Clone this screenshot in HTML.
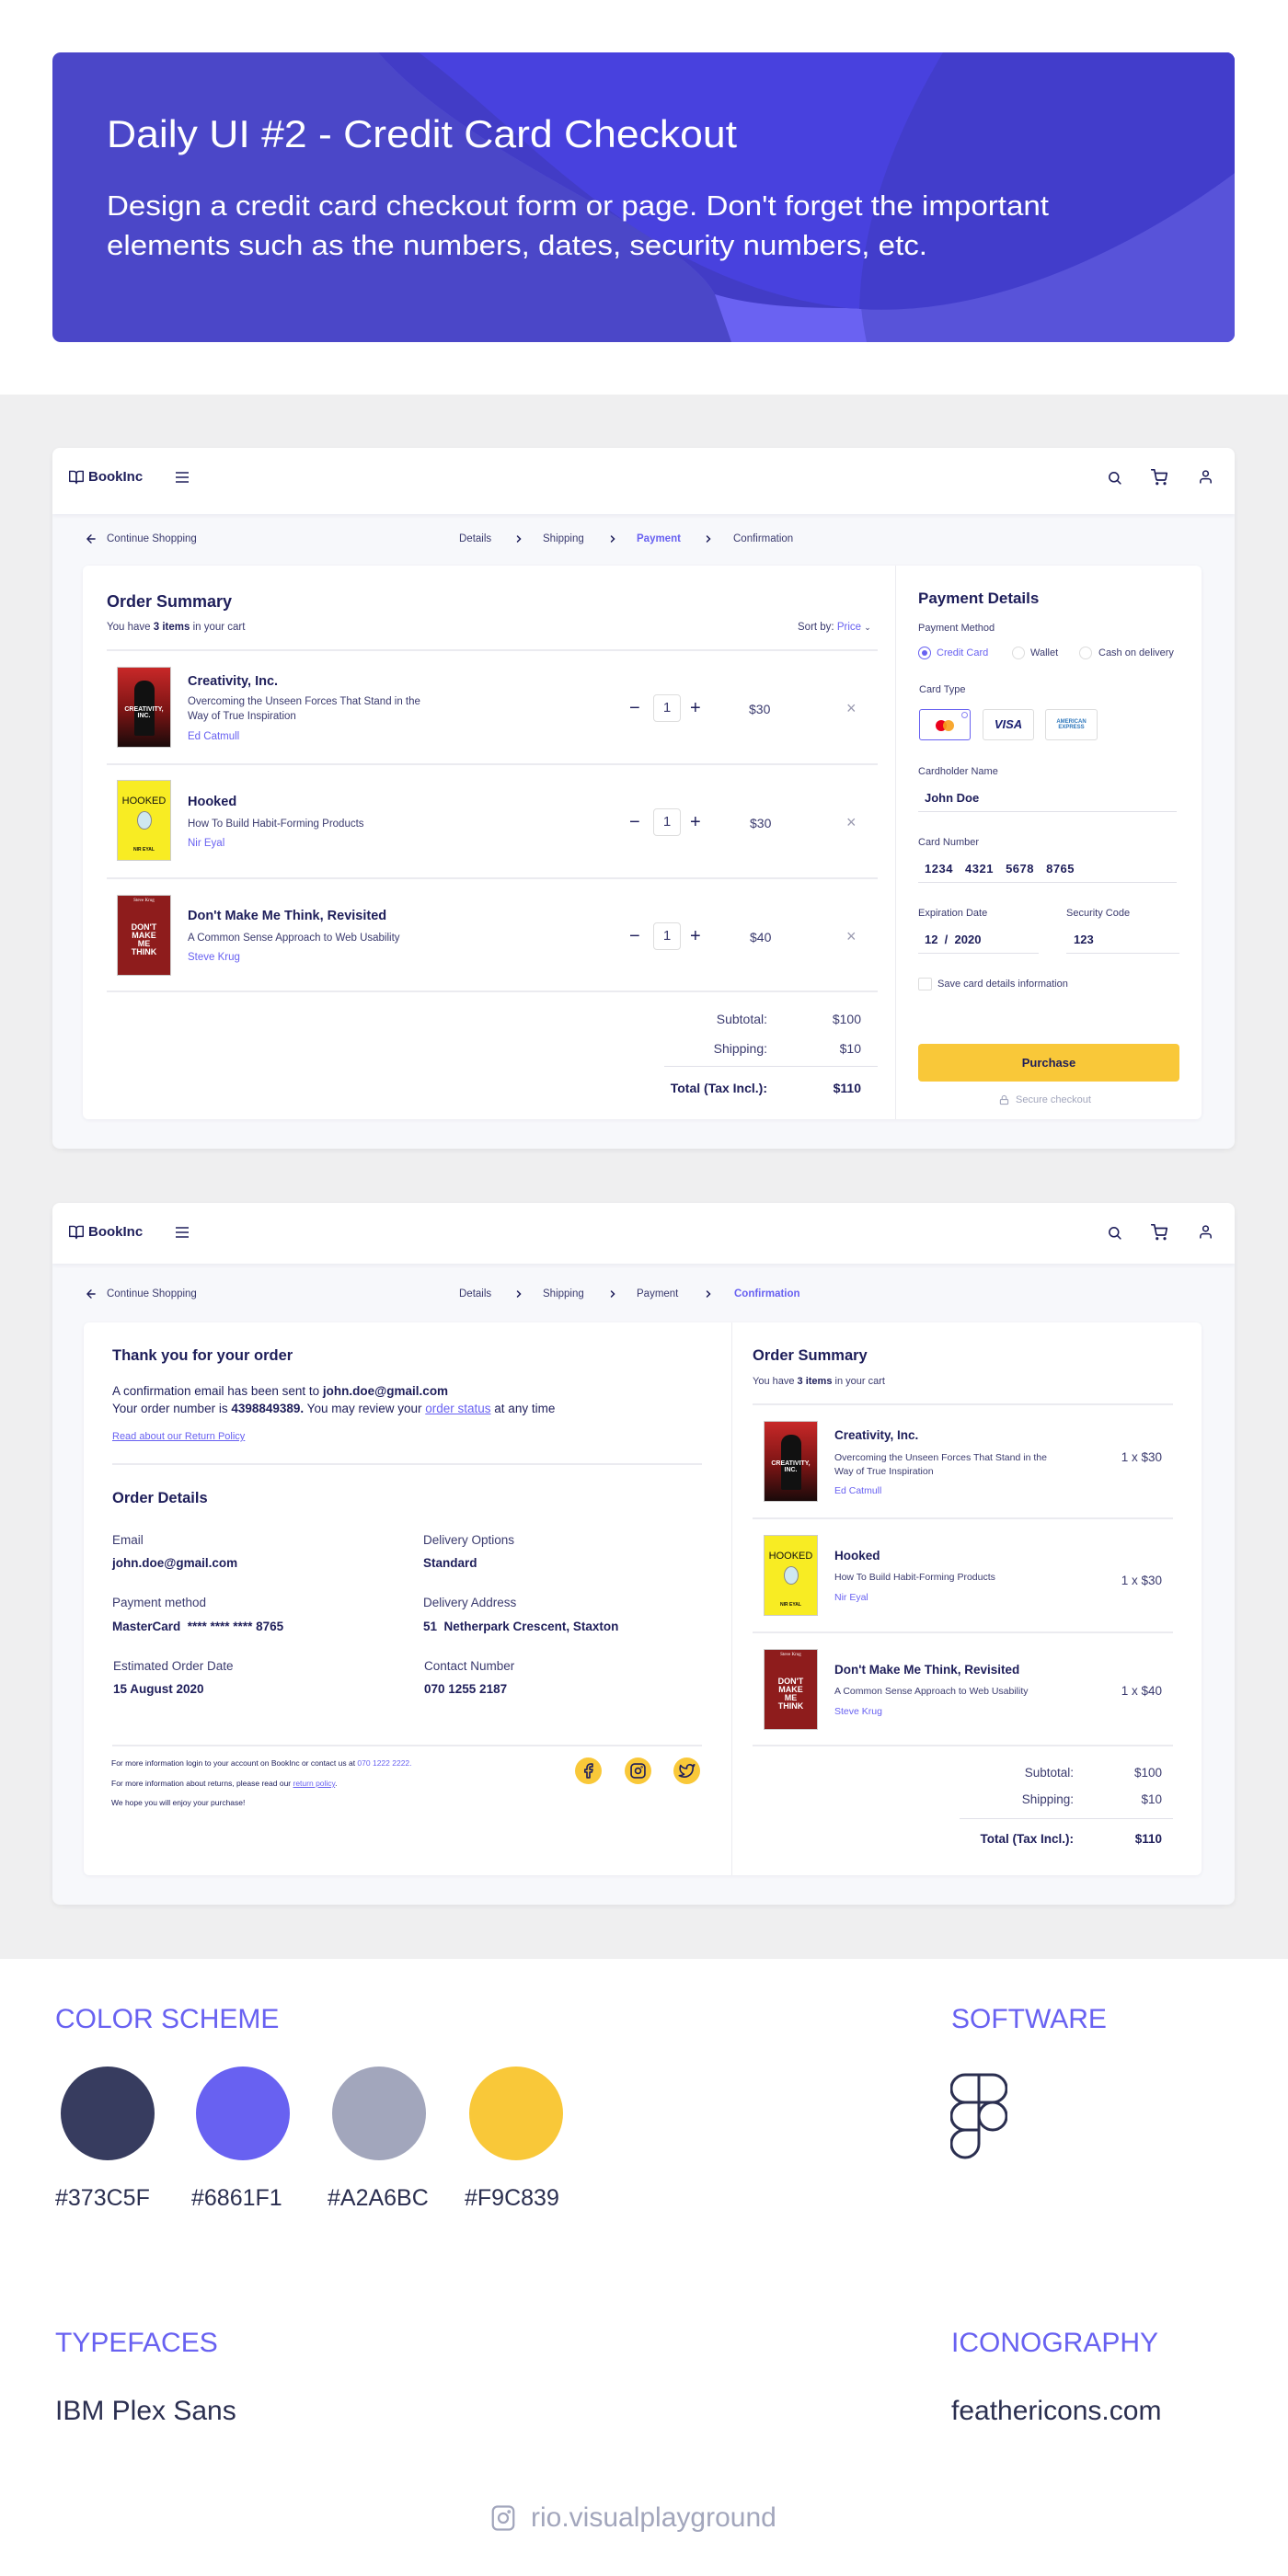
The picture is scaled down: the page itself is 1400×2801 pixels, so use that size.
<!DOCTYPE html>
<html><head><meta charset="utf-8">
<style>
*{margin:0;padding:0;box-sizing:border-box}
body{width:1400px;height:2801px;position:relative;background:#fff;font-family:"Liberation Sans",sans-serif;color:#1E1E5A;overflow:hidden}
.a{position:absolute;white-space:nowrap}
.gray{position:absolute;left:0;top:429px;width:1400px;height:1701px;background:#EFEFF0}
.oc{position:absolute;left:57px;width:1285px;background:#F7F8FB;border-radius:8px;box-shadow:0 2px 6px rgba(0,0,0,.06);overflow:hidden}
.nav{position:absolute;left:0;top:0;width:100%;background:#fff;box-shadow:0 2px 4px rgba(30,30,90,.06)}
.ic{position:absolute;width:100%;background:#fff;border-radius:6px;box-shadow:0 1px 4px rgba(30,30,90,.06)}
.hr{position:absolute;height:2px;background:#EBEBF0}
.navy{color:#1E1E5A}.body{color:#3A3A6E}.acc{color:#6861F1}
.b{font-weight:bold}
.cover{position:absolute;width:59px;height:88px;overflow:hidden;border:1px solid #ccc}
.qbox{position:absolute;width:30px;height:30px;border:1px solid #ddd;border-radius:4px;text-align:center;line-height:28px;font-size:15px;color:#3A3A6E}
.soc{position:absolute;width:29px;height:29px;border-radius:50%;background:#F9C839}
</style></head><body>

<!-- banner -->
<svg class="a" style="left:57px;top:57px" width="1285" height="315" viewBox="0 0 1285 315">
<defs><clipPath id="cp"><rect width="1285" height="315" rx="9"/></clipPath></defs>
<g clip-path="url(#cp)">
<rect width="1285" height="315" fill="#4B47C8"/>
<path d="M354,0 C460,120 680,190 720,263 L738,315 L1285,315 L1285,0Z" fill="#6A62F2"/>
<path d="M968,0 C900,100 860,200 885,315 L1285,315 L1285,0Z" fill="#5853D9"/>
<path d="M354,0 C460,120 680,190 720,263 C760,275 810,278 863,278 C1050,290 1220,180 1285,131 L1285,0Z" fill="#423CC6"/>
<path d="M398,0 C520,90 640,250 863,278 C1050,290 1220,180 1285,131 L1285,0Z" fill="#4841DE"/>
<path d="M968,0 C915,90 880,180 877,279 C1050,290 1220,180 1285,131 L1285,0Z" fill="#423DCB"/>
</g>
<text x="59" y="103" fill="#fff" font-family="Liberation Sans" font-size="42" textLength="685" lengthAdjust="spacingAndGlyphs">Daily UI  #2 - Credit Card Checkout</text>
<text x="59" y="177" fill="#fff" font-family="Liberation Sans" font-size="31" textLength="1024" lengthAdjust="spacingAndGlyphs">Design a credit card checkout form or page. Don't forget the important</text>
<text x="59" y="220" fill="#fff" font-family="Liberation Sans" font-size="31" textLength="892" lengthAdjust="spacingAndGlyphs">elements such as the numbers, dates, security numbers, etc.</text>
</svg>

<div class="gray"></div>

<!-- ============ CARD 1 ============ -->
<div class="oc" style="top:487px;height:762px">
 <div class="nav" style="height:72px"></div>
 <div class="ic" style="left:33px;top:128px;width:1216px;height:602px"></div>
</div>

<svg class="a" style="left:74px;top:511px" width="18" height="16" viewBox="0 0 24 22" fill="none" stroke="#1E1E5A" stroke-width="2" stroke-linejoin="round"><path d="M2 2h6a4 4 0 0 1 4 4v14a3 3 0 0 0-3-3H2z"/><path d="M22 2h-6a4 4 0 0 0-4 4v14a3 3 0 0 1 3-3h7z"/></svg>
<div class="a b navy" style="left:96px;top:509px;font-size:15px;line-height:20px">BookInc</div>
<svg class="a" style="left:190px;top:512px" width="16" height="14" viewBox="0 0 16 14" stroke="#1E1E5A" stroke-width="1.6"><path d="M1 2h14M1 7h14M1 12h14"/></svg>
<svg class="a" style="left:1203px;top:511px" width="17" height="17" viewBox="0 0 24 24" fill="none" stroke="#1E1E5A" stroke-width="2.2" stroke-linecap="round"><circle cx="11" cy="11" r="7"/><path d="M21 21l-4.5-4.5"/></svg>
<svg class="a" style="left:1251px;top:510px" width="18" height="18" viewBox="0 0 24 24" fill="none" stroke="#1E1E5A" stroke-width="2.2" stroke-linecap="round" stroke-linejoin="round"><circle cx="9" cy="21" r="1"/><circle cx="20" cy="21" r="1"/><path d="M1 1h4l2.7 13.4a2 2 0 0 0 2 1.6h9.7a2 2 0 0 0 2-1.6L23 6H6"/></svg>
<svg class="a" style="left:1302px;top:510px" width="17" height="17" viewBox="0 0 24 24" fill="none" stroke="#1E1E5A" stroke-width="2.2" stroke-linecap="round"><path d="M20 21v-2a4 4 0 0 0-4-4H8a4 4 0 0 0-4 4v2"/><circle cx="12" cy="7" r="4"/></svg>

<svg class="a" style="left:92px;top:579px" width="14" height="14" viewBox="0 0 24 24" fill="none" stroke="#1E1E5A" stroke-width="2.4" stroke-linecap="round" stroke-linejoin="round"><path d="M19 12H5M12 19l-7-7 7-7"/></svg>
<div class="a body" style="left:116px;top:578px;font-size:11.5px;line-height:16px">Continue Shopping</div>
<div class="a body" style="left:499px;top:578px;font-size:11.5px;line-height:16px">Details</div>
<div class="a body" style="left:590px;top:578px;font-size:11.5px;line-height:16px">Shipping</div>
<div class="a acc b" style="left:692px;top:578px;font-size:11.5px;line-height:16px">Payment</div>
<div class="a body" style="left:797px;top:578px;font-size:11.5px;line-height:16px">Confirmation</div>
<svg class="a" style="left:558px;top:580px" width="12" height="12" viewBox="0 0 24 24" fill="none" stroke="#1E1E5A" stroke-width="3" stroke-linecap="round"><path d="M9 18l6-6-6-6"/></svg>
<svg class="a" style="left:660px;top:580px" width="12" height="12" viewBox="0 0 24 24" fill="none" stroke="#1E1E5A" stroke-width="3" stroke-linecap="round"><path d="M9 18l6-6-6-6"/></svg>
<svg class="a" style="left:764px;top:580px" width="12" height="12" viewBox="0 0 24 24" fill="none" stroke="#1E1E5A" stroke-width="3" stroke-linecap="round"><path d="M9 18l6-6-6-6"/></svg>

<div class="a" style="left:973px;top:615px;width:1px;height:602px;background:#ECECF0"></div>
<div class="a b navy" style="left:116px;top:642px;font-size:18px;line-height:24px">Order Summary</div>
<div class="a body" style="left:116px;top:674px;font-size:11.5px;line-height:16px">You have <b class="navy">3 items</b> in your cart</div>
<div class="a body" style="left:867px;top:674px;font-size:11.5px;line-height:16px">Sort by: <span class="acc">Price</span> <span style="font-size:9px">&#8964;</span></div>
<div class="hr" style="left:116px;top:706px;width:838px"></div>
<div class="hr" style="left:116px;top:830px;width:838px"></div>
<div class="hr" style="left:116px;top:954px;width:838px"></div>
<div class="hr" style="left:116px;top:1077px;width:838px"></div>

<div class="cover" style="left:127px;top:725px;background:linear-gradient(#C82828,#7a1414 55%,#1a0a0a)"><div style="position:absolute;left:18px;top:14px;width:22px;height:60px;background:#111;border-radius:10px 10px 2px 2px"></div><div style="position:absolute;left:0;width:100%;top:42px;text-align:center;color:#fff;font-size:7px;font-weight:bold">CREATIVITY, INC.</div></div>
<div class="cover" style="left:127px;top:848px;background:#F8EC23"><div style="position:absolute;top:16px;width:100%;text-align:center;font-size:11px;color:#111">HOOKED</div><div style="position:absolute;left:21px;top:33px;width:16px;height:20px;border:1px solid #888;border-radius:50%;background:#cfe8f0"></div><div style="position:absolute;top:72px;width:100%;text-align:center;font-size:5px;font-weight:bold;color:#111">NIR EYAL</div></div>
<div class="cover" style="left:127px;top:973px;background:#8E1C1C"><div style="position:absolute;top:3px;width:100%;text-align:center;font-size:5px;color:#fff;font-family:'Liberation Serif'">Steve Krug</div><div style="position:absolute;top:30px;width:100%;text-align:center;font-size:9px;line-height:9px;color:#fff;font-weight:bold">DON'T<br>MAKE<br>ME<br>THINK</div></div>

<div class="a b navy" style="left:204px;top:731px;font-size:14.5px;line-height:20px">Creativity, Inc.</div>
<div class="a body" style="left:204px;top:755px;font-size:11.5px;line-height:16px">Overcoming the Unseen Forces That Stand in the<br>Way of True Inspiration</div>
<div class="a acc" style="left:204px;top:793px;font-size:11.5px;line-height:16px">Ed Catmull</div>
<div class="a b navy" style="left:204px;top:862px;font-size:14.5px;line-height:20px">Hooked</div>
<div class="a body" style="left:204px;top:888px;font-size:11.5px;line-height:16px">How To Build Habit-Forming Products</div>
<div class="a acc" style="left:204px;top:909px;font-size:11.5px;line-height:16px">Nir Eyal</div>
<div class="a b navy" style="left:204px;top:986px;font-size:14.5px;line-height:20px">Don't Make Me Think, Revisited</div>
<div class="a body" style="left:204px;top:1012px;font-size:11.5px;line-height:16px">A Common Sense Approach to Web Usability</div>
<div class="a acc" style="left:204px;top:1033px;font-size:11.5px;line-height:16px">Steve Krug</div>

<div class="a navy" style="left:684px;top:758px;font-size:20px;line-height:24px">&minus;</div><div class="qbox" style="left:710px;top:755px">1</div><div class="a navy" style="left:750px;top:758px;font-size:20px;line-height:24px">+</div><div class="a body" style="left:814px;top:762px;font-size:14px;line-height:18px">$30</div><div class="a" style="left:920px;top:759px;font-size:18px;line-height:22px;color:#9a9ab0">&times;</div>
<div class="a navy" style="left:684px;top:882px;font-size:20px;line-height:24px">&minus;</div><div class="qbox" style="left:710px;top:879px">1</div><div class="a navy" style="left:750px;top:882px;font-size:20px;line-height:24px">+</div><div class="a body" style="left:815px;top:886px;font-size:14px;line-height:18px">$30</div><div class="a" style="left:920px;top:883px;font-size:18px;line-height:22px;color:#9a9ab0">&times;</div>
<div class="a navy" style="left:684px;top:1006px;font-size:20px;line-height:24px">&minus;</div><div class="qbox" style="left:710px;top:1003px">1</div><div class="a navy" style="left:750px;top:1006px;font-size:20px;line-height:24px">+</div><div class="a body" style="left:815px;top:1010px;font-size:14px;line-height:18px">$40</div><div class="a" style="left:920px;top:1007px;font-size:18px;line-height:22px;color:#9a9ab0">&times;</div>

<div class="a body" style="left:634px;width:200px;text-align:right;top:1099px;font-size:14px;line-height:18px">Subtotal:</div>
<div class="a body" style="left:836px;width:100px;text-align:right;top:1099px;font-size:14px;line-height:18px">$100</div>
<div class="a body" style="left:634px;width:200px;text-align:right;top:1131px;font-size:14px;line-height:18px">Shipping:</div>
<div class="a body" style="left:836px;width:100px;text-align:right;top:1131px;font-size:14px;line-height:18px">$10</div>
<div class="hr" style="left:722px;top:1159px;width:232px;height:1px;background:#E0E0E8"></div>
<div class="a b navy" style="left:634px;width:200px;text-align:right;top:1174px;font-size:14px;line-height:18px">Total (Tax Incl.):</div>
<div class="a b navy" style="left:836px;width:100px;text-align:right;top:1174px;font-size:14px;line-height:18px">$110</div>

<div class="a b navy" style="left:998px;top:640px;font-size:17px;line-height:22px">Payment Details</div>
<div class="a body" style="left:998px;top:676px;font-size:11px;line-height:15px">Payment Method</div>
<div class="a" style="left:998px;top:703px;width:14px;height:14px;border:1.5px solid #6861F1;border-radius:50%"><div style="margin:2.5px;width:6px;height:6px;border-radius:50%;background:#6861F1"></div></div>
<div class="a acc" style="left:1018px;top:703px;font-size:11px;line-height:15px">Credit Card</div>
<div class="a" style="left:1100px;top:703px;width:14px;height:14px;border:1px solid #ddd;border-radius:50%"></div>
<div class="a body" style="left:1120px;top:703px;font-size:11px;line-height:15px">Wallet</div>
<div class="a" style="left:1173px;top:703px;width:14px;height:14px;border:1px solid #ddd;border-radius:50%"></div>
<div class="a body" style="left:1194px;top:703px;font-size:11px;line-height:15px">Cash on delivery</div>
<div class="a body" style="left:999px;top:743px;font-size:11px;line-height:15px">Card Type</div>
<div class="a" style="left:999px;top:771px;width:56px;height:34px;border:1.5px solid #6861F1;border-radius:3px">
 <div style="position:absolute;left:17px;top:11px;width:12px;height:12px;border-radius:50%;background:#EB001B"></div>
 <div style="position:absolute;left:25px;top:11px;width:12px;height:12px;border-radius:50%;background:#F79E1B;opacity:.9"></div>
 <div style="position:absolute;right:2px;top:2px;width:7px;height:7px;border:1px solid #8a86f4;border-radius:50%"></div>
</div>
<div class="a" style="left:1068px;top:771px;width:56px;height:34px;border:1px solid #ddd;border-radius:3px;text-align:center;line-height:32px;font-size:13px;font-weight:bold;font-style:italic;color:#1a1f71">VISA</div>
<div class="a" style="left:1136px;top:771px;width:57px;height:34px;border:1px solid #ddd;border-radius:3px;text-align:center;padding-top:10px;font-size:6px;line-height:6px;font-weight:bold;color:#2E77BC">AMERICAN<br>EXPRESS</div>
<div class="a body" style="left:998px;top:832px;font-size:11px;line-height:15px">Cardholder Name</div>
<div class="a b navy" style="left:1005px;top:859px;font-size:13px;line-height:18px">John Doe</div>
<div class="hr" style="left:998px;top:882px;width:281px;height:1px;background:#E0E0E8"></div>
<div class="a body" style="left:998px;top:909px;font-size:11px;line-height:15px">Card Number</div>
<div class="a b navy" style="left:1005px;top:936px;font-size:13px;line-height:18px;word-spacing:9px;letter-spacing:.5px">1234 4321 5678 8765</div>
<div class="hr" style="left:998px;top:959px;width:281px;height:1px;background:#E0E0E8"></div>
<div class="a body" style="left:998px;top:986px;font-size:11px;line-height:15px">Expiration Date</div>
<div class="a b navy" style="left:1005px;top:1013px;font-size:13px;line-height:18px">12 &nbsp;/ &nbsp;2020</div>
<div class="hr" style="left:998px;top:1036px;width:131px;height:1px;background:#E0E0E8"></div>
<div class="a body" style="left:1159px;top:986px;font-size:11px;line-height:15px">Security Code</div>
<div class="a b navy" style="left:1167px;top:1013px;font-size:13px;line-height:18px">123</div>
<div class="hr" style="left:1159px;top:1036px;width:123px;height:1px;background:#E0E0E8"></div>
<div class="a" style="left:998px;top:1063px;width:15px;height:14px;border:1px solid #ddd;border-radius:2px"></div>
<div class="a body" style="left:1019px;top:1063px;font-size:11px;line-height:15px">Save card details information</div>
<div class="a b navy" style="left:998px;top:1135px;width:284px;height:41px;background:#F9C839;border-radius:4px;text-align:center;line-height:41px;font-size:13px">Purchase</div>
<svg class="a" style="left:1086px;top:1190px" width="11" height="12" viewBox="0 0 24 24" fill="none" stroke="#A2A6BC" stroke-width="2.4"><rect x="3" y="11" width="18" height="11" rx="2"/><path d="M7 11V7a5 5 0 0 1 10 0v4"/></svg>
<div class="a" style="left:1104px;top:1189px;font-size:11px;line-height:15px;color:#A2A6BC">Secure checkout</div>

<!-- ============ CARD 2 ============ -->
<div class="oc" style="top:1308px;height:763px">
 <div class="nav" style="height:66px"></div>
 <div class="ic" style="left:34px;top:130px;width:1215px;height:601px"></div>
</div>
<svg class="a" style="left:74px;top:1332px" width="18" height="16" viewBox="0 0 24 22" fill="none" stroke="#1E1E5A" stroke-width="2" stroke-linejoin="round"><path d="M2 2h6a4 4 0 0 1 4 4v14a3 3 0 0 0-3-3H2z"/><path d="M22 2h-6a4 4 0 0 0-4 4v14a3 3 0 0 1 3-3h7z"/></svg>
<div class="a b navy" style="left:96px;top:1330px;font-size:15px;line-height:20px">BookInc</div>
<svg class="a" style="left:190px;top:1333px" width="16" height="14" viewBox="0 0 16 14" stroke="#1E1E5A" stroke-width="1.6"><path d="M1 2h14M1 7h14M1 12h14"/></svg>
<svg class="a" style="left:1203px;top:1332px" width="17" height="17" viewBox="0 0 24 24" fill="none" stroke="#1E1E5A" stroke-width="2.2" stroke-linecap="round"><circle cx="11" cy="11" r="7"/><path d="M21 21l-4.5-4.5"/></svg>
<svg class="a" style="left:1251px;top:1331px" width="18" height="18" viewBox="0 0 24 24" fill="none" stroke="#1E1E5A" stroke-width="2.2" stroke-linecap="round" stroke-linejoin="round"><circle cx="9" cy="21" r="1"/><circle cx="20" cy="21" r="1"/><path d="M1 1h4l2.7 13.4a2 2 0 0 0 2 1.6h9.7a2 2 0 0 0 2-1.6L23 6H6"/></svg>
<svg class="a" style="left:1302px;top:1331px" width="17" height="17" viewBox="0 0 24 24" fill="none" stroke="#1E1E5A" stroke-width="2.2" stroke-linecap="round"><path d="M20 21v-2a4 4 0 0 0-4-4H8a4 4 0 0 0-4 4v2"/><circle cx="12" cy="7" r="4"/></svg>

<svg class="a" style="left:92px;top:1400px" width="14" height="14" viewBox="0 0 24 24" fill="none" stroke="#1E1E5A" stroke-width="2.4" stroke-linecap="round" stroke-linejoin="round"><path d="M19 12H5M12 19l-7-7 7-7"/></svg>
<div class="a body" style="left:116px;top:1399px;font-size:11.5px;line-height:16px">Continue Shopping</div>
<div class="a body" style="left:499px;top:1399px;font-size:11.5px;line-height:16px">Details</div>
<div class="a body" style="left:590px;top:1399px;font-size:11.5px;line-height:16px">Shipping</div>
<div class="a body" style="left:692px;top:1399px;font-size:11.5px;line-height:16px">Payment</div>
<div class="a acc b" style="left:798px;top:1399px;font-size:11.5px;line-height:16px">Confirmation</div>
<svg class="a" style="left:558px;top:1401px" width="12" height="12" viewBox="0 0 24 24" fill="none" stroke="#1E1E5A" stroke-width="3" stroke-linecap="round"><path d="M9 18l6-6-6-6"/></svg>
<svg class="a" style="left:660px;top:1401px" width="12" height="12" viewBox="0 0 24 24" fill="none" stroke="#1E1E5A" stroke-width="3" stroke-linecap="round"><path d="M9 18l6-6-6-6"/></svg>
<svg class="a" style="left:764px;top:1401px" width="12" height="12" viewBox="0 0 24 24" fill="none" stroke="#1E1E5A" stroke-width="3" stroke-linecap="round"><path d="M9 18l6-6-6-6"/></svg>

<div class="a" style="left:795px;top:1438px;width:1px;height:601px;background:#ECECF0"></div>

<div class="a b navy" style="left:122px;top:1463px;font-size:16.5px;line-height:22px">Thank you for your order</div>
<div class="a navy" style="left:122px;top:1503px;font-size:13.5px;line-height:19px">A confirmation email has been sent to <b>john.doe@gmail.com</b><br>Your order number is <b>4398849389.</b> You may review your <u class="acc">order status</u> at any time</div>
<div class="a acc" style="left:122px;top:1555px;font-size:11px;line-height:15px;text-decoration:underline">Read about our Return Policy</div>
<div class="hr" style="left:122px;top:1591px;width:641px"></div>
<div class="a b navy" style="left:122px;top:1618px;font-size:16.5px;line-height:22px">Order Details</div>
<div class="a body" style="left:122px;top:1666px;font-size:13.5px;line-height:18px">Email</div>
<div class="a b navy" style="left:122px;top:1691px;font-size:13.5px;line-height:18px">john.doe@gmail.com</div>
<div class="a body" style="left:122px;top:1734px;font-size:13.5px;line-height:18px">Payment method</div>
<div class="a b navy" style="left:122px;top:1760px;font-size:13.5px;line-height:18px">MasterCard&nbsp; **** **** **** 8765</div>
<div class="a body" style="left:123px;top:1803px;font-size:13.5px;line-height:18px">Estimated Order Date</div>
<div class="a b navy" style="left:123px;top:1828px;font-size:13.5px;line-height:18px">15 August 2020</div>
<div class="a body" style="left:460px;top:1666px;font-size:13.5px;line-height:18px">Delivery Options</div>
<div class="a b navy" style="left:460px;top:1691px;font-size:13.5px;line-height:18px">Standard</div>
<div class="a body" style="left:460px;top:1734px;font-size:13.5px;line-height:18px">Delivery Address</div>
<div class="a b navy" style="left:460px;top:1760px;font-size:13.5px;line-height:18px">51&nbsp; Netherpark Crescent, Staxton</div>
<div class="a body" style="left:461px;top:1803px;font-size:13.5px;line-height:18px">Contact Number</div>
<div class="a b navy" style="left:461px;top:1828px;font-size:13.5px;line-height:18px">070 1255 2187</div>
<div class="hr" style="left:122px;top:1897px;width:641px"></div>
<div class="a navy" style="left:121px;top:1911px;font-size:8.5px;line-height:12px">For more information login to your account on BookInc or contact us at <span class="acc">070 1222 2222.</span></div>
<div class="a navy" style="left:121px;top:1933px;font-size:8.5px;line-height:12px">For more information about returns, please read our <u class="acc">return policy</u>.</div>
<div class="a navy" style="left:121px;top:1954px;font-size:8.5px;line-height:12px">We hope you will enjoy your purchase!</div>
<div class="soc" style="left:625px;top:1911px"><svg width="29" height="29" viewBox="-7.5 -7.5 39 39" fill="none" stroke="#1E1E5A" stroke-width="2.2" stroke-linejoin="round"><path d="M18 2h-3a5 5 0 0 0-5 5v3H7v4h3v8h4v-8h3l1-4h-4V7a1 1 0 0 1 1-1h3z"/></svg></div>
<div class="soc" style="left:679px;top:1911px"><svg width="29" height="29" viewBox="-7.5 -7.5 39 39" fill="none" stroke="#1E1E5A" stroke-width="2.2"><rect x="2" y="2" width="20" height="20" rx="5"/><circle cx="12" cy="12" r="4"/><circle cx="17.5" cy="6.5" r=".5"/></svg></div>
<div class="soc" style="left:732px;top:1911px"><svg width="29" height="29" viewBox="-7.5 -7.5 39 39" fill="none" stroke="#1E1E5A" stroke-width="2.2" stroke-linejoin="round"><path d="M23 3a10.9 10.9 0 0 1-3.14 1.53 4.48 4.48 0 0 0-7.860 3v1A10.66 10.66 0 0 1 3 4s-4 9 5 13a11.64 11.64 0 0 1-7 2c9 5 20 0 20-11.5a4.5 4.5 0 0 0-.08-.83A7.72 7.72 0 0 0 23 3z"/></svg></div>

<div class="a b navy" style="left:818px;top:1463px;font-size:16.5px;line-height:22px">Order Summary</div>
<div class="a body" style="left:818px;top:1494px;font-size:11px;line-height:16px">You have <b class="navy">3 items</b> in your cart</div>
<div class="hr" style="left:818px;top:1526px;width:457px"></div>
<div class="hr" style="left:818px;top:1650px;width:457px"></div>
<div class="hr" style="left:818px;top:1774px;width:457px"></div>
<div class="hr" style="left:818px;top:1897px;width:457px"></div>
<div class="cover" style="left:830px;top:1545px;background:linear-gradient(#C82828,#7a1414 55%,#1a0a0a)"><div style="position:absolute;left:18px;top:14px;width:22px;height:60px;background:#111;border-radius:10px 10px 2px 2px"></div><div style="position:absolute;left:0;width:100%;top:42px;text-align:center;color:#fff;font-size:7px;font-weight:bold">CREATIVITY, INC.</div></div>
<div class="cover" style="left:830px;top:1669px;background:#F8EC23"><div style="position:absolute;top:16px;width:100%;text-align:center;font-size:11px;color:#111">HOOKED</div><div style="position:absolute;left:21px;top:33px;width:16px;height:20px;border:1px solid #888;border-radius:50%;background:#cfe8f0"></div><div style="position:absolute;top:72px;width:100%;text-align:center;font-size:5px;font-weight:bold;color:#111">NIR EYAL</div></div>
<div class="cover" style="left:830px;top:1793px;background:#8E1C1C"><div style="position:absolute;top:3px;width:100%;text-align:center;font-size:5px;color:#fff;font-family:'Liberation Serif'">Steve Krug</div><div style="position:absolute;top:30px;width:100%;text-align:center;font-size:9px;line-height:9px;color:#fff;font-weight:bold">DON'T<br>MAKE<br>ME<br>THINK</div></div>
<div class="a b navy" style="left:907px;top:1551px;font-size:13.5px;line-height:20px">Creativity, Inc.</div>
<div class="a body" style="left:907px;top:1578px;font-size:10.5px;line-height:15px">Overcoming the Unseen Forces That Stand in the<br>Way of True Inspiration</div>
<div class="a acc" style="left:907px;top:1614px;font-size:10.5px;line-height:15px">Ed Catmull</div>
<div class="a b navy" style="left:907px;top:1682px;font-size:13.5px;line-height:20px">Hooked</div>
<div class="a body" style="left:907px;top:1708px;font-size:10.5px;line-height:15px">How To Build Habit-Forming Products</div>
<div class="a acc" style="left:907px;top:1730px;font-size:10.5px;line-height:15px">Nir Eyal</div>
<div class="a b navy" style="left:907px;top:1806px;font-size:13.5px;line-height:20px">Don't Make Me Think, Revisited</div>
<div class="a body" style="left:907px;top:1832px;font-size:10.5px;line-height:15px">A Common Sense Approach to Web Usability</div>
<div class="a acc" style="left:907px;top:1854px;font-size:10.5px;line-height:15px">Steve Krug</div>
<div class="a body" style="left:1163px;width:100px;text-align:right;top:1576px;font-size:13.5px;line-height:18px">1 x $30</div>
<div class="a body" style="left:1163px;width:100px;text-align:right;top:1710px;font-size:13.5px;line-height:18px">1 x $30</div>
<div class="a body" style="left:1163px;width:100px;text-align:right;top:1830px;font-size:13.5px;line-height:18px">1 x $40</div>
<div class="a body" style="left:967px;width:200px;text-align:right;top:1919px;font-size:13.5px;line-height:18px">Subtotal:</div>
<div class="a body" style="left:1163px;width:100px;text-align:right;top:1919px;font-size:13.5px;line-height:18px">$100</div>
<div class="a body" style="left:967px;width:200px;text-align:right;top:1948px;font-size:13.5px;line-height:18px">Shipping:</div>
<div class="a body" style="left:1163px;width:100px;text-align:right;top:1948px;font-size:13.5px;line-height:18px">$10</div>
<div class="hr" style="left:1043px;top:1977px;width:232px;height:1px;background:#E0E0E8"></div>
<div class="a b navy" style="left:967px;width:200px;text-align:right;top:1991px;font-size:13.5px;line-height:18px">Total (Tax Incl.):</div>
<div class="a b navy" style="left:1163px;width:100px;text-align:right;top:1991px;font-size:13.5px;line-height:18px">$110</div>

<!-- ============ BOTTOM ============ -->
<div class="a" style="left:60px;top:2177px;font-size:30px;line-height:38px;color:#6861F1">COLOR SCHEME</div>
<div class="a" style="left:1034px;top:2177px;font-size:30px;line-height:38px;color:#6861F1">SOFTWARE</div>
<div class="a" style="left:66px;top:2247px;width:102px;height:102px;border-radius:50%;background:#373C5F"></div>
<div class="a" style="left:213px;top:2247px;width:102px;height:102px;border-radius:50%;background:#6861F1"></div>
<div class="a" style="left:361px;top:2247px;width:102px;height:102px;border-radius:50%;background:#A2A6BC"></div>
<div class="a" style="left:510px;top:2247px;width:102px;height:102px;border-radius:50%;background:#F9C839"></div>
<div class="a" style="left:60px;top:2375px;font-size:25px;line-height:30px;color:#2B2F50">#373C5F</div>
<div class="a" style="left:208px;top:2375px;font-size:25px;line-height:30px;color:#2B2F50">#6861F1</div>
<div class="a" style="left:356px;top:2375px;font-size:25px;line-height:30px;color:#2B2F50">#A2A6BC</div>
<div class="a" style="left:505px;top:2375px;font-size:25px;line-height:30px;color:#2B2F50">#F9C839</div>
<svg class="a" style="left:1033px;top:2254px" width="62" height="94" viewBox="0 0 62 94" fill="none" stroke="#2B2F50" stroke-width="3"><path d="M31 2H16a15 15 0 0 0 0 30h15z"/><path d="M31 2h15a15 15 0 0 1 0 30H31z"/><path d="M31 32H16a15 15 0 0 0 0 30h15z"/><circle cx="46" cy="47" r="15"/><path d="M31 62H16a15 15 0 1 0 15 15z"/></svg>
<div class="a" style="left:60px;top:2529px;font-size:30px;line-height:38px;color:#6861F1">TYPEFACES</div>
<div class="a" style="left:1034px;top:2529px;font-size:30px;line-height:38px;color:#6861F1">ICONOGRAPHY</div>
<div class="a" style="left:60px;top:2603px;font-size:30px;line-height:38px;color:#2B2F50">IBM Plex Sans</div>
<div class="a" style="left:1034px;top:2603px;font-size:30px;line-height:38px;color:#2B2F50">feathericons.com</div>
<svg class="a" style="left:532px;top:2723px" width="30" height="30" viewBox="0 0 24 24" fill="none" stroke="#A2A6BC" stroke-width="1.8"><rect x="3" y="2" width="18" height="20" rx="4"/><circle cx="12" cy="12" r="4"/><circle cx="17" cy="6.5" r=".6"/></svg>
<div class="a" style="left:577px;top:2719px;font-size:30px;line-height:38px;color:#A2A6BC">rio.visualplayground</div>
</body></html>
